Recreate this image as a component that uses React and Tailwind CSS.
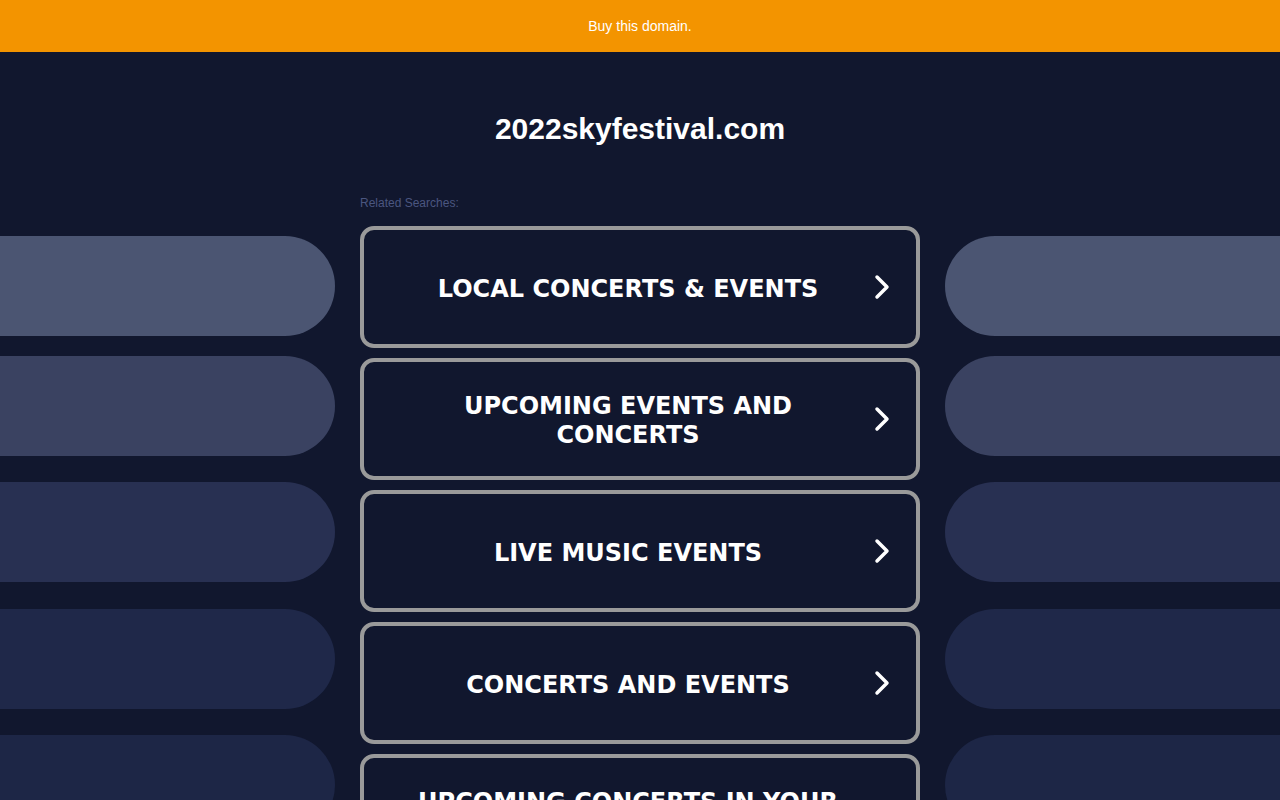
import React from 'react';

const SEARCHES = [
  'LOCAL CONCERTS & EVENTS',
  'UPCOMING EVENTS AND CONCERTS',
  'LIVE MUSIC EVENTS',
  'CONCERTS AND EVENTS',
  'UPCOMING CONCERTS IN YOUR AREA',
];

// side decoration pills: colour + top margin
const PILLS = [
  { bg: 'bg-[#4b5572]', mt: 'mt-[10px]' },
  { bg: 'bg-[#3a4261]', mt: 'mt-[20px]' },
  { bg: 'bg-[#283052]', mt: 'mt-[26px]' },
  { bg: 'bg-[#1f2849]', mt: 'mt-[27px]' },
  { bg: 'bg-[#1d2646]', mt: 'mt-[26px]' },
];

const Chevron = () => (
  <svg width="18" height="26" viewBox="0 0 18 26" fill="none" className="shrink-0">
    <path d="M4 3 L14 13 L4 23" stroke="white" strokeWidth="3.5" strokeLinecap="round" strokeLinejoin="round" />
  </svg>
);

const SideColumn = ({ side }) => (
  <div className="flex flex-col">
    {PILLS.map((p, i) => (
      <div
        key={i}
        className={`h-[100px] shrink-0 ${p.bg} ${p.mt} ${side === 'left' ? 'rounded-r-[50px]' : 'rounded-l-[50px]'}`}
      />
    ))}
  </div>
);

export default function App() {
  return (
    <div className="h-[800px] overflow-hidden bg-[#11172e] font-['Liberation_Sans',Arial,sans-serif]">
      {/* Top banner */}
      <div className="h-[52px] bg-[#f39400] flex items-center justify-center">
        <span className="text-white text-[14px]">Buy this domain.</span>
      </div>

      {/* Domain title */}
      <div className="pt-[59px] h-[142px] text-center">
        <h1 className="text-white text-[30px] leading-[36px] font-bold">2022skyfestival.com</h1>
      </div>

      <div className="grid grid-cols-[335px_560px_335px] gap-x-[25px]">
        <div className="pt-[32px]">
          <SideColumn side="left" />
        </div>

        <div>
          <div className="pt-px text-[12px] leading-[16px] text-[#4b5680] mb-[15px]">Related Searches:</div>
          <div className="flex flex-col gap-[10px]">
            {SEARCHES.map((s) => (
              <a
                key={s}
                href="#"
                className="h-[122px] shrink-0 border-4 border-[#9a9a9a] rounded-[14px] flex items-center pl-[46px] pr-[25px]"
              >
                <span className="w-[436px] pt-[4px] text-center text-white font-bold text-[24px] leading-[29px] font-['DejaVu_Sans',Verdana,sans-serif]">
                  {s}
                </span>
                <span className="ml-auto">
                  <Chevron />
                </span>
              </a>
            ))}
          </div>
        </div>

        <div className="pt-[32px]">
          <SideColumn side="right" />
        </div>
      </div>
    </div>
  );
}
